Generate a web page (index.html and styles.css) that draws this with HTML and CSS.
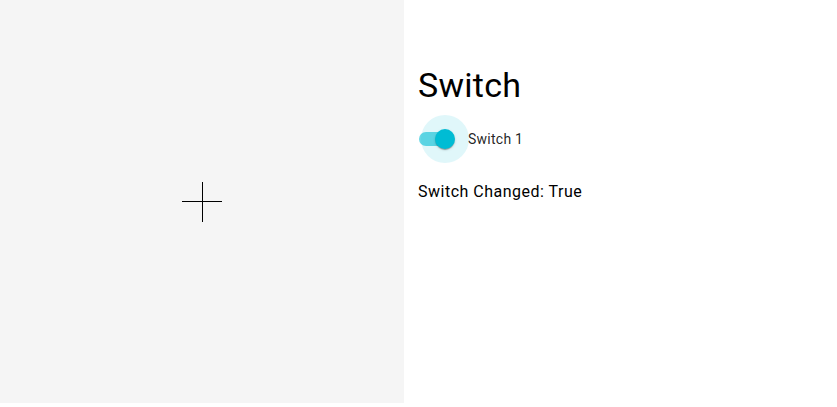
FILE: index.html
```html
<!DOCTYPE html>
<html>
<head>
<meta charset="utf-8">
<link rel="stylesheet" href="styles.css">
</head>
<body>
<div class="page">
  <div class="canvas">
    <div class="cross"><span class="h"></span><span class="v"></span></div>
  </div>
  <div class="content">
    <h1 class="title">Switch</h1>
    <div class="row">
      <div class="switch">
        <span class="halo"></span>
        <span class="track"></span>
        <span class="thumb"></span>
      </div>
      <span class="label">Switch 1</span>
    </div>
    <p class="status">Switch Changed: True</p>
  </div>
</div>
</body>
</html>
```
FILE: styles.css
```css
html, body { margin: 0; padding: 0; background: #fff; }
body { font-family: Roboto, "Liberation Sans", sans-serif; }
.page { display: flex; width: 837px; height: 407px; }
.canvas {
  width: 404px; height: 403px; background: #f5f5f5;
  display: flex; align-items: center; justify-content: center;
}
.cross { position: relative; width: 40px; height: 40px; }
.cross .h { position: absolute; left: 0; top: 19.5px; width: 40px; height: 1px; background: #000; }
.cross .v { position: absolute; top: 0; left: 19.5px; width: 1px; height: 40px; background: #000; }
.content { padding: 65px 0 0 14px; display: flex; flex-direction: column; }
.title { margin: 0; font-size: 34px; line-height: 40px; font-weight: 400; letter-spacing: 0.25px; color: #000; }
.row { display: flex; align-items: center; margin-top: 10px; height: 48px; }
.switch { position: relative; width: 49px; height: 48px; margin-left: 1px; }
.halo { position: absolute; left: 2px; top: 0; width: 48px; height: 48px; border-radius: 50%; background: rgba(0,188,212,0.12); }
.track { position: absolute; left: 0; top: 17px; width: 34px; height: 14px; border-radius: 7px; background: #00bcd4; opacity: 0.6; }
.thumb { position: absolute; left: 16px; top: 14px; width: 20px; height: 20px; border-radius: 50%; background: #00bcd4;
  box-shadow: 0 2px 1px -1px rgba(0,0,0,.2), 0 1px 1px 0 rgba(0,0,0,.14), 0 1px 3px 0 rgba(0,0,0,.12); }
.label { font-size: 14px; color: rgba(0,0,0,0.87); line-height: 20px; letter-spacing: 0.25px; }
.status { margin: 17px 0 0; font-size: 16px; line-height: 24px; letter-spacing: 0.5px; color: #000; }
```
